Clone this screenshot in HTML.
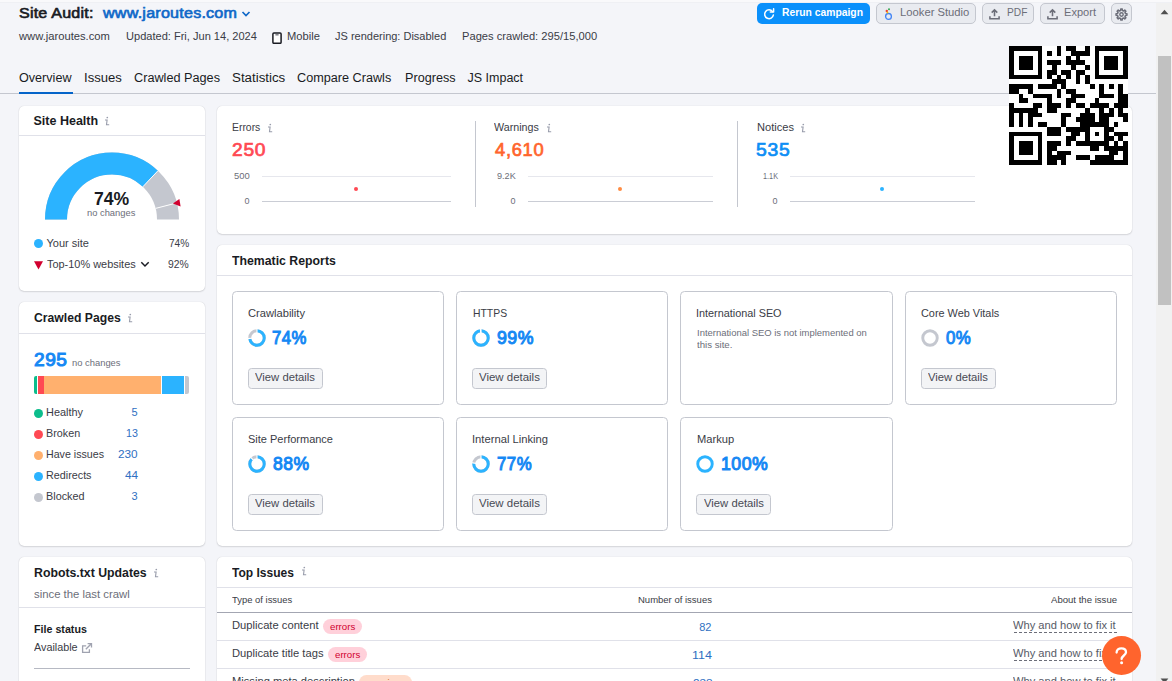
<!DOCTYPE html>
<html><head><meta charset="utf-8"><title>Site Audit</title>
<style>
*{box-sizing:border-box;margin:0;padding:0}
html,body{width:1172px;height:681px;overflow:hidden;background:#f4f5f9;font-family:"Liberation Sans",sans-serif;color:#191b23}
.a{position:absolute;white-space:nowrap;line-height:1;transform-origin:0 0}
.card{position:absolute;background:#fff;border-radius:5px;box-shadow:0 0 1px 0 rgba(25,27,35,.22),0 1px 1.5px 0 rgba(25,27,35,.12)}
.hl{position:absolute;height:1px;background:#e0e1e9}
.btn{position:absolute;background:#e9ebf0;border:1px solid #c4c7cf;border-radius:5px}
.vd{position:absolute;width:75px;height:21px;background:#f3f4f6;border:1px solid #c4c7cf;border-radius:3.5px}
.tile{position:absolute;width:212px;height:114px;border:1px solid #c4c7cf;border-radius:4.5px;background:#fff}
.dot{position:absolute;width:9px;height:9px;border-radius:50%}
.tag{position:absolute;height:15px;border-radius:8px}
</style></head><body>

<!-- top strip -->
<div class="a" style="left:0;top:0;width:1157px;height:2px;background:#f9f9fb"></div>

<!-- header icons -->
<svg class="a" style="left:241px;top:9.7px" width="10" height="8" viewBox="0 0 10 8"><path d="M1.5 2l3.5 3.5L8.5 2" fill="none" stroke="#0f68c8" stroke-width="1.7"/></svg>
<svg class="a" style="left:272px;top:32px" width="10" height="12" viewBox="0 0 10 12"><rect x="0.9" y="0.9" width="8.2" height="10.4" rx="1" fill="#fff" stroke="#191b23" stroke-width="1.5"/><rect x="3.4" y="2.3" width="3.2" height="1.1" fill="#50525c"/></svg>

<!-- tabs -->
<div class="a" style="left:0;top:93px;width:1157px;height:1px;background:#c4c7cf"></div>
<div class="a" style="left:19px;top:92px;width:54px;height:2px;background:#0464c9"></div>

<!-- header buttons -->
<div class="a" style="left:757px;top:3px;width:113px;height:21px;background:#0a90fb;border-radius:5px"></div>
<svg class="a" style="left:762.7px;top:8px" width="12" height="12" viewBox="0 0 12 12"><path d="M9.6 3.6A4.4 4.4 0 1 0 10.4 6.9" fill="none" stroke="#fff" stroke-width="1.5" stroke-linecap="round"/><path d="M7.3 4.1h3.3V.8" fill="none" stroke="#fff" stroke-width="1.5" stroke-linecap="round" stroke-linejoin="round"/></svg>
<div class="btn" style="left:876px;top:3px;width:100px;height:21px"></div>
<svg class="a" style="left:883px;top:6px" width="11" height="15" viewBox="0 0 11 15"><circle cx="5.5" cy="10.4" r="2.9" fill="none" stroke="#4285f4" stroke-width="1.3"/><circle cx="3.8" cy="5" r="1.2" fill="#ea4335"/><circle cx="4.5" cy="6.5" r="0.9" fill="#fbbc04"/><circle cx="6" cy="3.2" r="1" fill="#34a853"/></svg>
<div class="btn" style="left:982px;top:3px;width:52px;height:21px"></div>
<svg class="a" style="left:989.4px;top:7.8px" width="11" height="12" viewBox="0 0 11 12"><path d="M5.5 8.2V2M2.7 4.6L5.5 1.8 8.3 4.6M0.9 8.3v2.4h9.2V8.3" fill="none" stroke="#6c6e79" stroke-width="1.55"/></svg>
<div class="btn" style="left:1040px;top:3px;width:65px;height:21px"></div>
<svg class="a" style="left:1046.6px;top:7.8px" width="11" height="12" viewBox="0 0 11 12"><path d="M5.5 8.2V2M2.7 4.6L5.5 1.8 8.3 4.6M0.9 8.3v2.4h9.2V8.3" fill="none" stroke="#6c6e79" stroke-width="1.55"/></svg>
<div class="btn" style="left:1111px;top:3px;width:21px;height:21px"></div>
<svg class="a" style="left:1114.5px;top:7.9px" width="13" height="13" viewBox="0 0 13 13"><path d="M5.61 2.50L5.73 1.05L7.27 1.05L7.39 2.50L8.70 3.04L9.80 2.10L10.90 3.20L9.96 4.30L10.50 5.61L11.95 5.73L11.95 7.27L10.50 7.39L9.96 8.70L10.90 9.80L9.80 10.90L8.70 9.96L7.39 10.50L7.27 11.95L5.73 11.95L5.61 10.50L4.30 9.96L3.20 10.90L2.10 9.80L3.04 8.70L2.50 7.39L1.05 7.27L1.05 5.73L2.50 5.61L3.04 4.30L2.10 3.20L3.20 2.10L4.30 3.04Z" fill="none" stroke="#6c6e79" stroke-width="1.5" stroke-linejoin="round"/><circle cx="6.5" cy="6.5" r="1.7" fill="none" stroke="#6c6e79" stroke-width="1.4"/></svg>

<!-- ============ CARDS ============ -->
<div class="card" style="left:18.5px;top:105.6px;width:186.85px;height:185.4px"></div>
<div class="hl" style="left:18.5px;top:135px;width:186.85px"></div>
<div class="card" style="left:18.5px;top:302.2px;width:186.85px;height:244px"></div>
<div class="hl" style="left:18.5px;top:333px;width:186.85px"></div>
<div class="card" style="left:18.5px;top:557.4px;width:186.85px;height:140px"></div>
<div class="hl" style="left:18.5px;top:607px;width:186.85px"></div>
<div class="card" style="left:216.6px;top:105.6px;width:915.4px;height:128.9px"></div>
<div class="card" style="left:216.6px;top:245.4px;width:915.4px;height:300.8px"></div>
<div class="hl" style="left:216.6px;top:275px;width:915.4px"></div>
<div class="card" style="left:216.6px;top:557.4px;width:915.4px;height:140px"></div>
<div class="hl" style="left:216.6px;top:587px;width:915.4px"></div>

<!-- info icons -->
<svg class="a" style="left:104px;top:116.2px" width="7" height="11" viewBox="0 0 7 11"><circle cx="3.3" cy="1.5" r="0.85" fill="#989cab"/><path d="M1 4H3.1L2.5 8.8H5.2" fill="none" stroke="#989cab" stroke-width="1.1"/></svg>
<svg class="a" style="left:126.8px;top:312.5px" width="7" height="11" viewBox="0 0 7 11"><circle cx="3.3" cy="1.5" r="0.85" fill="#989cab"/><path d="M1 4H3.1L2.5 8.8H5.2" fill="none" stroke="#989cab" stroke-width="1.1"/></svg>
<svg class="a" style="left:153px;top:567.5px" width="7" height="11" viewBox="0 0 7 11"><circle cx="3.3" cy="1.5" r="0.85" fill="#989cab"/><path d="M1 4H3.1L2.5 8.8H5.2" fill="none" stroke="#989cab" stroke-width="1.1"/></svg>
<svg class="a" style="left:266.8px;top:123.2px" width="7" height="11" viewBox="0 0 7 11"><circle cx="3.3" cy="1.5" r="0.85" fill="#989cab"/><path d="M1 4H3.1L2.5 8.8H5.2" fill="none" stroke="#989cab" stroke-width="1.1"/></svg>
<svg class="a" style="left:545.5px;top:123.2px" width="7" height="11" viewBox="0 0 7 11"><circle cx="3.3" cy="1.5" r="0.85" fill="#989cab"/><path d="M1 4H3.1L2.5 8.8H5.2" fill="none" stroke="#989cab" stroke-width="1.1"/></svg>
<svg class="a" style="left:799.8px;top:123.2px" width="7" height="11" viewBox="0 0 7 11"><circle cx="3.3" cy="1.5" r="0.85" fill="#989cab"/><path d="M1 4H3.1L2.5 8.8H5.2" fill="none" stroke="#989cab" stroke-width="1.1"/></svg>
<svg class="a" style="left:300.5px;top:565.5px" width="7" height="11" viewBox="0 0 7 11"><circle cx="3.3" cy="1.5" r="0.85" fill="#989cab"/><path d="M1 4H3.1L2.5 8.8H5.2" fill="none" stroke="#989cab" stroke-width="1.1"/></svg>

<!-- gauge -->
<svg class="a" style="left:19px;top:106px" width="186" height="130" viewBox="0 0 186 130">
  <path d="M37 113.6A56 56 0 0 1 149 113.6" stroke="#c4c7cf" stroke-width="22" fill="none"/>
  <path d="M37 113.6A56 56 0 0 1 149 113.6" stroke="#2bb3ff" stroke-width="22" fill="none" pathLength="100" stroke-dasharray="74 100"/>
  <path d="M123.8 80.8L138.9 64.8" stroke="#fff" stroke-width="1"/>
  <path d="M136.6 102.4L157.9 96.9" stroke="#fff" stroke-width="1"/>
  <path d="M153.9 97.6L160.4 92.9L161.6 100.6Z" fill="#d1002f"/>
</svg>
<div class="dot" style="left:34px;top:239px;background:#2bb3ff"></div>
<svg class="a" style="left:34px;top:261px" width="9" height="9" viewBox="0 0 9 9"><path d="M0 0.3h9L4.5 8.6z" fill="#d1002f"/></svg>
<svg class="a" style="left:140px;top:261px" width="10" height="7" viewBox="0 0 10 7"><path d="M1.3 1.3l3.7 3.7 3.7-3.7" fill="none" stroke="#191b23" stroke-width="1.5"/></svg>

<!-- crawled bar -->
<div class="a" style="left:34px;top:376px;width:3px;height:18px;background:#0cbd8c;border-radius:2px 0 0 2px"></div>
<div class="a" style="left:37.5px;top:376px;width:6.5px;height:18px;background:#ff4953"></div>
<div class="a" style="left:44px;top:376px;width:117px;height:18px;background:#ffb06e"></div>
<div class="a" style="left:162.25px;top:376px;width:21.5px;height:18px;background:#2bb3ff"></div>
<div class="a" style="left:185px;top:376px;width:4px;height:18px;background:#c4c7cf;border-radius:0 2px 2px 0"></div>
<div class="dot" style="left:34px;top:409px;background:#0cbd8c"></div>
<div class="dot" style="left:34px;top:430px;background:#ff4953"></div>
<div class="dot" style="left:34px;top:451px;background:#ffb06e"></div>
<div class="dot" style="left:34px;top:472px;background:#2bb3ff"></div>
<div class="dot" style="left:34px;top:493px;background:#c4c7cf"></div>

<!-- robots -->
<svg class="a" style="left:81px;top:642px" width="12" height="12" viewBox="0 0 12 12"><path d="M5.2 3.9H1.6v6.5h6.8V7.3M4.8 7.3L10.3 1.8M6.6 1.6h3.9v3.9" fill="none" stroke="#a0a3b0" stroke-width="1.3"/></svg>
<div class="a" style="left:34px;top:668px;width:156px;height:1px;background:#b6b9c3"></div>

<!-- errors card charts -->
<div class="a" style="left:262px;top:176px;width:188.5px;height:1px;background:#e6e7ed"></div>
<div class="a" style="left:262px;top:201px;width:188.5px;height:1px;background:#cacdd5"></div>
<div class="a" style="left:354px;top:187.25px;width:4px;height:4px;border-radius:50%;background:#ff4953"></div>
<div class="a" style="left:475px;top:121px;width:1px;height:86px;background:#c4c7cf"></div>
<div class="a" style="left:527.5px;top:176px;width:185px;height:1px;background:#e6e7ed"></div>
<div class="a" style="left:527.5px;top:201px;width:185px;height:1px;background:#cacdd5"></div>
<div class="a" style="left:618px;top:187.25px;width:4px;height:4px;border-radius:50%;background:#ff8c43"></div>
<div class="a" style="left:737px;top:121px;width:1px;height:86px;background:#c4c7cf"></div>
<div class="a" style="left:789.5px;top:176px;width:185px;height:1px;background:#e6e7ed"></div>
<div class="a" style="left:789.5px;top:201px;width:185px;height:1px;background:#cacdd5"></div>
<div class="a" style="left:880px;top:187.25px;width:4px;height:4px;border-radius:50%;background:#2bb3ff"></div>

<!-- thematic tiles -->
<div class="tile" style="left:232px;top:291px"></div>
<div class="tile" style="left:456px;top:291px"></div>
<div class="tile" style="left:680px;top:291px;width:213px"></div>
<div class="tile" style="left:905px;top:291px"></div>
<div class="tile" style="left:232px;top:417px"></div>
<div class="tile" style="left:456px;top:417px"></div>
<div class="tile" style="left:680px;top:417px;width:213px"></div>
<div class="vd" style="left:248px;top:368px"></div>
<div class="vd" style="left:472px;top:368px"></div>
<div class="vd" style="left:921px;top:368px"></div>
<div class="vd" style="left:248px;top:494px"></div>
<div class="vd" style="left:472px;top:494px"></div>
<div class="vd" style="left:696px;top:494px"></div>

<svg class="a" style="left:247.00px;top:327.75px" width="20" height="20" viewBox="0 0 20 20"><circle cx="10" cy="10" r="7.25" fill="none" stroke="#c4c7cf" stroke-width="2.9"/><circle cx="10" cy="10" r="7.25" fill="none" stroke="#2bb3ff" stroke-width="2.9" pathLength="100" stroke-dasharray="74 100" transform="rotate(-90 10 10)"/><path d="M10.00 5.00L10.00 0.50" stroke="#fff" stroke-width="1.1"/><path d="M5.01 10.31L0.52 10.60" stroke="#fff" stroke-width="1.1"/></svg>
<svg class="a" style="left:471.00px;top:327.75px" width="20" height="20" viewBox="0 0 20 20"><circle cx="10" cy="10" r="7.25" fill="none" stroke="#c4c7cf" stroke-width="2.9"/><circle cx="10" cy="10" r="7.25" fill="none" stroke="#2bb3ff" stroke-width="2.9" pathLength="100" stroke-dasharray="99 100" transform="rotate(-90 10 10)"/><path d="M10.00 5.00L10.00 0.50" stroke="#fff" stroke-width="1.1"/><path d="M9.69 5.01L9.40 0.52" stroke="#fff" stroke-width="1.1"/></svg>
<svg class="a" style="left:919.80px;top:327.75px" width="20" height="20" viewBox="0 0 20 20"><circle cx="10" cy="10" r="7.25" fill="none" stroke="#c4c7cf" stroke-width="2.9"/></svg>
<svg class="a" style="left:247.00px;top:453.75px" width="20" height="20" viewBox="0 0 20 20"><circle cx="10" cy="10" r="7.25" fill="none" stroke="#c4c7cf" stroke-width="2.9"/><circle cx="10" cy="10" r="7.25" fill="none" stroke="#2bb3ff" stroke-width="2.9" pathLength="100" stroke-dasharray="88 100" transform="rotate(-90 10 10)"/><path d="M10.00 5.00L10.00 0.50" stroke="#fff" stroke-width="1.1"/><path d="M6.58 6.36L3.50 3.07" stroke="#fff" stroke-width="1.1"/></svg>
<svg class="a" style="left:471.00px;top:453.75px" width="20" height="20" viewBox="0 0 20 20"><circle cx="10" cy="10" r="7.25" fill="none" stroke="#c4c7cf" stroke-width="2.9"/><circle cx="10" cy="10" r="7.25" fill="none" stroke="#2bb3ff" stroke-width="2.9" pathLength="100" stroke-dasharray="77 100" transform="rotate(-90 10 10)"/><path d="M10.00 5.00L10.00 0.50" stroke="#fff" stroke-width="1.1"/><path d="M5.04 9.37L0.57 8.81" stroke="#fff" stroke-width="1.1"/></svg>
<svg class="a" style="left:695.10px;top:453.75px" width="20" height="20" viewBox="0 0 20 20"><circle cx="10" cy="10" r="7.25" fill="none" stroke="#2bb3ff" stroke-width="2.9"/></svg>

<!-- top issues table -->
<div class="a" style="left:217px;top:611.5px;width:915px;height:1px;background:#a3a6b2"></div>
<div class="hl" style="left:217px;top:640px;width:915px"></div>
<div class="hl" style="left:217px;top:668px;width:915px"></div>
<div class="tag" style="left:323px;top:619px;width:39px;background:#ffd0da"></div>
<div class="tag" style="left:328px;top:647px;width:39px;background:#ffd0da"></div>
<div class="tag" style="left:359px;top:675px;width:53px;background:#ffdccb"></div>
<div class="a" style="left:1013.5px;top:632px;width:103px;height:0;border-top:1px dashed #6c6e79"></div>
<div class="a" style="left:1013.5px;top:660px;width:103px;height:0;border-top:1px dashed #6c6e79"></div>

<div class="a" style="left:19.35px;top:5.00px;font-size:15px;color:#191b23;transform:scaleX(1.0701);letter-spacing:0.2px;-webkit-text-stroke:0.65px #191b23">Site Audit:</div>
<div class="a" style="left:102.62px;top:5.00px;font-size:15px;color:#0f68c8;transform:scaleX(1.0742);letter-spacing:0.2px;-webkit-text-stroke:0.65px #0f68c8">www.jaroutes.com</div>
<div class="a" style="left:19.32px;top:31.00px;font-size:11px;color:#3a3c46;transform:scaleX(1.0179)">www.jaroutes.com</div>
<div class="a" style="left:125.50px;top:31.00px;font-size:11px;color:#3a3c46;transform:scaleX(1.0048)">Updated: Fri, Jun 14, 2024</div>
<div class="a" style="left:286.75px;top:31.00px;font-size:11px;color:#3a3c46;transform:scaleX(1.0144)">Mobile</div>
<div class="a" style="left:335.00px;top:31.00px;font-size:11px;color:#3a3c46">JS rendering: Disabled</div>
<div class="a" style="left:461.75px;top:31.00px;font-size:11px;color:#3a3c46;transform:scaleX(1.0135)">Pages crawled: 295/15,000</div>
<div class="a" style="left:19.00px;top:72.00px;font-size:12.5px;color:#191b23;transform:scaleX(1.0082)">Overview</div>
<div class="a" style="left:83.95px;top:72.00px;font-size:12.5px;color:#191b23;transform:scaleX(1.0465)">Issues</div>
<div class="a" style="left:133.75px;top:72.00px;font-size:12.5px;color:#191b23;transform:scaleX(1.0146)">Crawled Pages</div>
<div class="a" style="left:232.00px;top:72.00px;font-size:12.5px;color:#191b23;transform:scaleX(1.0651)">Statistics</div>
<div class="a" style="left:297.20px;top:72.00px;font-size:12.5px;color:#191b23;transform:scaleX(1.0126)">Compare Crawls</div>
<div class="a" style="left:404.69px;top:72.00px;font-size:12.5px;color:#191b23;transform:scaleX(1.0109)">Progress</div>
<div class="a" style="left:467.50px;top:72.00px;font-size:12.5px;color:#191b23">JS Impact</div>
<div class="a" style="left:781.75px;top:7.00px;font-size:11px;color:#fff;transform:scaleX(0.9397);font-weight:bold">Rerun campaign</div>
<div class="a" style="left:900.00px;top:7.00px;font-size:11px;color:#6c6e79;transform:scaleX(1.0220)">Looker Studio</div>
<div class="a" style="left:1006.70px;top:7.00px;font-size:11px;color:#6c6e79;transform:scaleX(0.9246)">PDF</div>
<div class="a" style="left:1064.40px;top:7.00px;font-size:11px;color:#6c6e79;transform:scaleX(1.0052)">Export</div>
<div class="a" style="left:33.50px;top:115.00px;font-size:12.5px;color:#191b23;font-weight:bold">Site Health</div>
<div class="a" style="left:93.70px;top:191.00px;font-size:17.5px;color:#191b23;transform:scaleX(1.0066);font-weight:bold">74%</div>
<div class="a" style="left:87.10px;top:208.00px;font-size:9.5px;color:#6c6e79;transform:scaleX(0.9843)">no changes</div>
<div class="a" style="left:46.50px;top:238.00px;font-size:11px;color:#3a3c46">Your site</div>
<div class="a" style="left:168.90px;top:238.00px;font-size:11px;color:#3a3c46;transform:scaleX(0.9175)">74%</div>
<div class="a" style="left:46.50px;top:259.00px;font-size:11px;color:#3a3c46;transform:scaleX(0.9937)">Top-10% websites</div>
<div class="a" style="left:168.40px;top:259.00px;font-size:11px;color:#3a3c46;transform:scaleX(0.9399)">92%</div>
<div class="a" style="left:34.00px;top:312.00px;font-size:12.5px;color:#191b23;transform:scaleX(0.9750);font-weight:bold">Crawled Pages</div>
<div class="a" style="left:33.83px;top:351.00px;font-size:18px;color:#1688f4;transform:scaleX(1.0618);letter-spacing:0.5px;-webkit-text-stroke:1.0px #1688f4">295</div>
<div class="a" style="left:71.50px;top:358.00px;font-size:9.5px;color:#6c6e79;transform:scaleX(0.9874)">no changes</div>
<div class="a" style="left:46.00px;top:407.00px;font-size:11px;color:#3a3c46;transform:scaleX(0.9921)">Healthy</div>
<div class="a" style="left:131.50px;top:407.00px;font-size:11px;color:#2f6fc2">5</div>
<div class="a" style="left:46.00px;top:428.00px;font-size:11px;color:#3a3c46;transform:scaleX(0.9788)">Broken</div>
<div class="a" style="left:125.75px;top:428.00px;font-size:11px;color:#2f6fc2;transform:scaleX(0.9697)">13</div>
<div class="a" style="left:46.00px;top:449.00px;font-size:11px;color:#3a3c46;transform:scaleX(0.9683)">Have issues</div>
<div class="a" style="left:118.00px;top:449.00px;font-size:11px;color:#2f6fc2;transform:scaleX(1.0694)">230</div>
<div class="a" style="left:46.00px;top:470.00px;font-size:11px;color:#3a3c46;transform:scaleX(0.9796)">Redirects</div>
<div class="a" style="left:124.50px;top:470.00px;font-size:11px;color:#2f6fc2;transform:scaleX(1.0728)">44</div>
<div class="a" style="left:46.00px;top:491.00px;font-size:11px;color:#3a3c46;transform:scaleX(0.9868)">Blocked</div>
<div class="a" style="left:131.50px;top:491.00px;font-size:11px;color:#2f6fc2">3</div>
<div class="a" style="left:34.00px;top:567.00px;font-size:12.5px;color:#191b23;transform:scaleX(0.9836);font-weight:bold">Robots.txt Updates</div>
<div class="a" style="left:34.00px;top:589.00px;font-size:11px;color:#6c6e79;transform:scaleX(1.0299)">since the last crawl</div>
<div class="a" style="left:34.00px;top:624.00px;font-size:11px;color:#191b23;transform:scaleX(0.9717);font-weight:bold">File status</div>
<div class="a" style="left:34.00px;top:642.00px;font-size:11px;color:#3a3c46;transform:scaleX(0.9814)">Available</div>
<div class="a" style="left:232.00px;top:122.00px;font-size:11px;color:#3a3c46;transform:scaleX(0.9444)">Errors</div>
<div class="a" style="left:232.37px;top:141.00px;font-size:18px;color:#ff4953;transform:scaleX(1.0663);letter-spacing:0.7px;-webkit-text-stroke:0.7px #ff4953">250</div>
<div class="a" style="left:233.75px;top:172.00px;font-size:9px;color:#6c6e79;transform:scaleX(1.0492)">500</div>
<div class="a" style="left:244.50px;top:197.00px;font-size:9px;color:#6c6e79">0</div>
<div class="a" style="left:494.25px;top:122.00px;font-size:11px;color:#3a3c46;transform:scaleX(0.9720)">Warnings</div>
<div class="a" style="left:494.76px;top:141.00px;font-size:18px;color:#ff642d;transform:scaleX(1.0179);letter-spacing:0.7px;-webkit-text-stroke:0.7px #ff642d">4,610</div>
<div class="a" style="left:496.75px;top:172.00px;font-size:9px;color:#6c6e79;transform:scaleX(1.0129)">9.2K</div>
<div class="a" style="left:510.50px;top:197.00px;font-size:9px;color:#6c6e79">0</div>
<div class="a" style="left:756.50px;top:122.00px;font-size:11px;color:#3a3c46;transform:scaleX(1.0086)">Notices</div>
<div class="a" style="left:756.17px;top:141.00px;font-size:18px;color:#0e8ef5;transform:scaleX(1.0709);letter-spacing:0.7px;-webkit-text-stroke:0.7px #0e8ef5">535</div>
<div class="a" style="left:762.50px;top:172.00px;font-size:9px;color:#6c6e79;transform:scaleX(0.8103)">1.1K</div>
<div class="a" style="left:772.50px;top:197.00px;font-size:9px;color:#6c6e79">0</div>
<div class="a" style="left:231.90px;top:255.00px;font-size:12.5px;color:#191b23;transform:scaleX(0.9832);font-weight:bold">Thematic Reports</div>
<div class="a" style="left:248.00px;top:308.00px;font-size:11px;color:#3a3c46;transform:scaleX(1.0135)">Crawlability</div>
<div class="a" style="left:272.46px;top:329.00px;font-size:18px;color:#1688f4;transform:scaleX(0.9284);letter-spacing:0.5px;-webkit-text-stroke:1.0px #1688f4">74%</div>
<div class="a" style="left:472.50px;top:308.00px;font-size:11px;color:#3a3c46;transform:scaleX(0.9449)">HTTPS</div>
<div class="a" style="left:497.49px;top:329.00px;font-size:18px;color:#1688f4;transform:scaleX(0.9863);letter-spacing:0.5px;-webkit-text-stroke:1.0px #1688f4">99%</div>
<div class="a" style="left:695.76px;top:308.00px;font-size:11px;color:#3a3c46;transform:scaleX(0.9852)">International SEO</div>
<div class="a" style="left:696.75px;top:328.00px;font-size:9.5px;color:#6c6e79;transform:scaleX(0.9954)">International SEO is not implemented on</div>
<div class="a" style="left:696.75px;top:340.00px;font-size:9.5px;color:#6c6e79;transform:scaleX(1.0159)">this site.</div>
<div class="a" style="left:921.00px;top:308.00px;font-size:11px;color:#3a3c46;transform:scaleX(0.9897)">Core Web Vitals</div>
<div class="a" style="left:946.22px;top:329.00px;font-size:18px;color:#1688f4;transform:scaleX(0.9360);letter-spacing:0.5px;-webkit-text-stroke:1.0px #1688f4">0%</div>
<div class="a" style="left:248.00px;top:434.00px;font-size:11px;color:#3a3c46">Site Performance</div>
<div class="a" style="left:272.69px;top:455.00px;font-size:18px;color:#1688f4;transform:scaleX(0.9758);letter-spacing:0.5px;-webkit-text-stroke:1.0px #1688f4">88%</div>
<div class="a" style="left:471.88px;top:434.00px;font-size:11px;color:#3a3c46;transform:scaleX(1.0192)">Internal Linking</div>
<div class="a" style="left:497.47px;top:455.00px;font-size:18px;color:#1688f4;transform:scaleX(0.9337);letter-spacing:0.5px;-webkit-text-stroke:1.0px #1688f4">77%</div>
<div class="a" style="left:696.75px;top:434.00px;font-size:11px;color:#3a3c46;transform:scaleX(1.0120)">Markup</div>
<div class="a" style="left:720.76px;top:455.00px;font-size:18px;color:#1688f4;transform:scaleX(0.9835);letter-spacing:0.5px;-webkit-text-stroke:1.0px #1688f4">100%</div>
<div class="a" style="left:255.00px;top:372.00px;font-size:11px;color:#484a54;transform:scaleX(1.0255)">View details</div>
<div class="a" style="left:479.40px;top:372.00px;font-size:11px;color:#484a54;transform:scaleX(1.0407)">View details</div>
<div class="a" style="left:928.00px;top:372.00px;font-size:11px;color:#484a54;transform:scaleX(1.0255)">View details</div>
<div class="a" style="left:255.00px;top:498.00px;font-size:11px;color:#484a54;transform:scaleX(1.0255)">View details</div>
<div class="a" style="left:479.40px;top:498.00px;font-size:11px;color:#484a54;transform:scaleX(1.0407)">View details</div>
<div class="a" style="left:703.50px;top:498.00px;font-size:11px;color:#484a54;transform:scaleX(1.0255)">View details</div>
<div class="a" style="left:232.25px;top:567.00px;font-size:12.5px;color:#191b23;transform:scaleX(0.9625);font-weight:bold">Top Issues</div>
<div class="a" style="left:232.25px;top:595.00px;font-size:9.5px;color:#3a3c46;transform:scaleX(0.9922)">Type of issues</div>
<div class="a" style="left:638.00px;top:595.00px;font-size:9.5px;color:#3a3c46">Number of issues</div>
<div class="a" style="left:1051.00px;top:595.00px;font-size:9.5px;color:#3a3c46;transform:scaleX(1.0084)">About the issue</div>
<div class="a" style="left:232.25px;top:620.00px;font-size:11px;color:#3a3c46;transform:scaleX(1.0183)">Duplicate content</div>
<div class="a" style="left:329.50px;top:622.00px;font-size:9.5px;color:#d1002f;transform:scaleX(1.0177)">errors</div>
<div class="a" style="left:699.20px;top:622.00px;font-size:11px;color:#2f6fc2">82</div>
<div class="a" style="left:1013.20px;top:620.00px;font-size:11px;color:#565a66;transform:scaleX(1.0115)">Why and how to fix it</div>
<div class="a" style="left:232.25px;top:648.00px;font-size:11px;color:#3a3c46;transform:scaleX(1.0179)">Duplicate title tags</div>
<div class="a" style="left:334.50px;top:650.00px;font-size:9.5px;color:#d1002f;transform:scaleX(1.0177)">errors</div>
<div class="a" style="left:692.20px;top:650.00px;font-size:11px;color:#2f6fc2;transform:scaleX(1.1367)">114</div>
<div class="a" style="left:1013.20px;top:648.00px;font-size:11px;color:#565a66;transform:scaleX(1.0115)">Why and how to fix it</div>
<div class="a" style="left:232.25px;top:676.00px;font-size:11px;color:#3a3c46;transform:scaleX(1.0150)">Missing meta description</div>
<div class="a" style="left:366.99px;top:678.00px;font-size:9.5px;color:#c64800;transform:scaleX(0.9932)">warnings</div>
<div class="a" style="left:692.50px;top:678.00px;font-size:11px;color:#2f6fc2;transform:scaleX(1.0694)">238</div>
<div class="a" style="left:1013.20px;top:676.00px;font-size:11px;color:#565a66;transform:scaleX(1.0115)">Why and how to fix it</div>

<!-- QR -->
<svg class="a" style="left:1009px;top:46px" width="119" height="119" viewBox="0 0 25 25" shape-rendering="crispEdges"><rect width="25" height="25" fill="#fff"/><path d="M0 0h7v1h-7zM10 0h1v1h-1zM12 0h2v1h-2zM16 0h1v1h-1zM18 0h7v1h-7zM0 1h1v1h-1zM6 1h1v1h-1zM8 1h1v1h-1zM10 1h1v1h-1zM13 1h4v1h-4zM18 1h1v1h-1zM24 1h1v1h-1zM0 2h1v1h-1zM2 2h3v1h-3zM6 2h1v1h-1zM12 2h1v1h-1zM14 2h1v1h-1zM18 2h1v1h-1zM20 2h3v1h-3zM24 2h1v1h-1zM0 3h1v1h-1zM2 3h3v1h-3zM6 3h1v1h-1zM8 3h3v1h-3zM12 3h4v1h-4zM18 3h1v1h-1zM20 3h3v1h-3zM24 3h1v1h-1zM0 4h1v1h-1zM2 4h3v1h-3zM6 4h1v1h-1zM9 4h1v1h-1zM13 4h1v1h-1zM16 4h1v1h-1zM18 4h1v1h-1zM20 4h3v1h-3zM24 4h1v1h-1zM0 5h1v1h-1zM6 5h1v1h-1zM8 5h2v1h-2zM11 5h2v1h-2zM14 5h2v1h-2zM18 5h1v1h-1zM24 5h1v1h-1zM0 6h7v1h-7zM8 6h1v1h-1zM10 6h1v1h-1zM12 6h1v1h-1zM14 6h1v1h-1zM16 6h1v1h-1zM18 6h7v1h-7zM9 7h3v1h-3zM14 7h1v1h-1zM16 7h1v1h-1zM0 8h5v1h-5zM6 8h4v1h-4zM11 8h1v1h-1zM17 8h1v1h-1zM19 8h1v1h-1zM21 8h1v1h-1zM23 8h1v1h-1zM0 9h2v1h-2zM4 9h1v1h-1zM10 9h1v1h-1zM12 9h2v1h-2zM19 9h1v1h-1zM23 9h1v1h-1zM2 10h1v1h-1zM5 10h4v1h-4zM10 10h1v1h-1zM13 10h3v1h-3zM19 10h3v1h-3zM23 10h2v1h-2zM2 11h2v1h-2zM8 11h1v1h-1zM12 11h2v1h-2zM18 11h1v1h-1zM23 11h2v1h-2zM0 12h1v1h-1zM5 12h2v1h-2zM8 12h3v1h-3zM12 12h1v1h-1zM14 12h2v1h-2zM17 12h4v1h-4zM22 12h3v1h-3zM0 13h6v1h-6zM8 13h2v1h-2zM16 13h1v1h-1zM19 13h1v1h-1zM21 13h1v1h-1zM23 13h1v1h-1zM0 14h1v1h-1zM2 14h1v1h-1zM4 14h3v1h-3zM11 14h2v1h-2zM15 14h3v1h-3zM19 14h3v1h-3zM23 14h2v1h-2zM0 15h1v1h-1zM2 15h1v1h-1zM4 15h1v1h-1zM11 15h1v1h-1zM14 15h4v1h-4zM19 15h2v1h-2zM24 15h1v1h-1zM0 16h1v1h-1zM2 16h1v1h-1zM4 16h1v1h-1zM6 16h2v1h-2zM11 16h1v1h-1zM15 16h6v1h-6zM22 16h1v1h-1zM8 17h3v1h-3zM12 17h5v1h-5zM20 17h2v1h-2zM0 18h7v1h-7zM8 18h3v1h-3zM13 18h2v1h-2zM16 18h1v1h-1zM18 18h1v1h-1zM20 18h1v1h-1zM22 18h3v1h-3zM0 19h1v1h-1zM6 19h1v1h-1zM12 19h2v1h-2zM16 19h1v1h-1zM20 19h2v1h-2zM23 19h1v1h-1zM0 20h1v1h-1zM2 20h3v1h-3zM6 20h1v1h-1zM8 20h3v1h-3zM12 20h1v1h-1zM14 20h7v1h-7zM22 20h1v1h-1zM24 20h1v1h-1zM0 21h1v1h-1zM2 21h3v1h-3zM6 21h1v1h-1zM8 21h2v1h-2zM17 21h2v1h-2zM20 21h5v1h-5zM0 22h1v1h-1zM2 22h3v1h-3zM6 22h1v1h-1zM8 22h1v1h-1zM10 22h3v1h-3zM21 22h2v1h-2zM24 22h1v1h-1zM0 23h1v1h-1zM6 23h1v1h-1zM8 23h4v1h-4zM14 23h3v1h-3zM18 23h4v1h-4zM24 23h1v1h-1zM0 24h7v1h-7zM8 24h2v1h-2zM11 24h1v1h-1zM17 24h8v1h-8z" fill="#000"/></svg>

<!-- help -->
<div class="a" style="left:1102px;top:636px;width:39px;height:39px;border-radius:50%;background:#ff642d"></div>
<svg class="a" style="left:1114px;top:647px" width="15" height="18" viewBox="0 0 15 18"><path d="M2.6 5.6C2.6 2.8 4.6 1.4 7.4 1.4c2.8 0 4.6 1.5 4.6 3.8 0 3.2-4.4 3.4-4.4 6.8" fill="none" stroke="#fff" stroke-width="2.3" stroke-linecap="round"/><circle cx="7.6" cy="15.7" r="1.5" fill="#fff"/></svg>

<!-- scrollbar -->
<div class="a" style="left:1156px;top:0;width:16px;height:681px;background:#f1f1f1"></div>
<div class="a" style="left:1158px;top:56px;width:13px;height:249px;background:#c1c1c1"></div>
<div class="a" style="left:0;top:0;width:1172px;height:2px;background:#f9f9fb"></div>
<div class="a" style="left:0;top:2px;width:1172px;height:1px;background:#eff0f4"></div>
<svg class="a" style="left:1160px;top:9px" width="9" height="6" viewBox="0 0 9 6"><path d="M0.6 5.2h7.8L4.5 0.8z" fill="#505050"/></svg>
<svg class="a" style="left:1160px;top:678px" width="9" height="6" viewBox="0 0 9 6"><path d="M0.6 0.5h7.8L4.5 5z" fill="#505050"/></svg>

</body></html>
